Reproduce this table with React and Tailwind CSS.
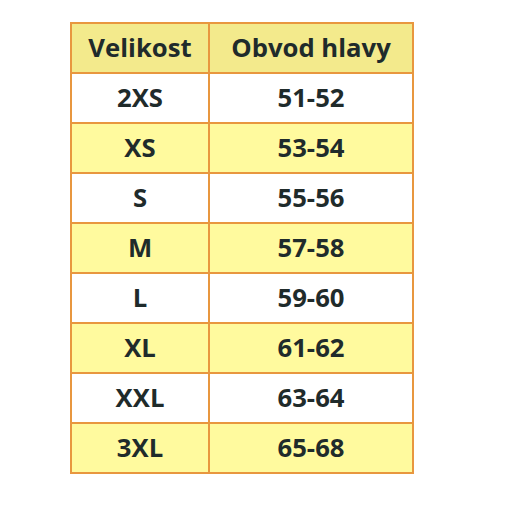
export default function App() {
  const rows = [
    ["2XS", "51-52"],
    ["XS", "53-54"],
    ["S", "55-56"],
    ["M", "57-58"],
    ["L", "59-60"],
    ["XL", "61-62"],
    ["XXL", "63-64"],
    ["3XL", "65-68"],
  ];
  return (
    <div className="w-[520px] h-[520px] bg-white pt-[22px] pl-[70px]" style={{ fontFamily: '"Open Sans", sans-serif' }}>
      <table className="border-collapse text-[25.7px] leading-none font-bold text-[#1f2b2b]">
        <thead>
          <tr className="bg-[#f3ea8c] h-[50px]">
            <th className="border-2 border-[#e8973f] w-[138px] text-center font-bold p-0">Velikost</th>
            <th className="border-2 border-[#e8973f] w-[204px] text-center font-bold p-0">Obvod hlavy</th>
          </tr>
        </thead>
        <tbody>
          {rows.map(([a, b], i) => (
            <tr key={a} className={i % 2 === 0 ? "bg-white h-[50px]" : "bg-[#fffa9e] h-[50px]"}>
              <td className="border-2 border-[#e8973f] text-center p-0">{a}</td>
              <td className="border-2 border-[#e8973f] text-center p-0">{b}</td>
            </tr>
          ))}
        </tbody>
      </table>
    </div>
  );
}
